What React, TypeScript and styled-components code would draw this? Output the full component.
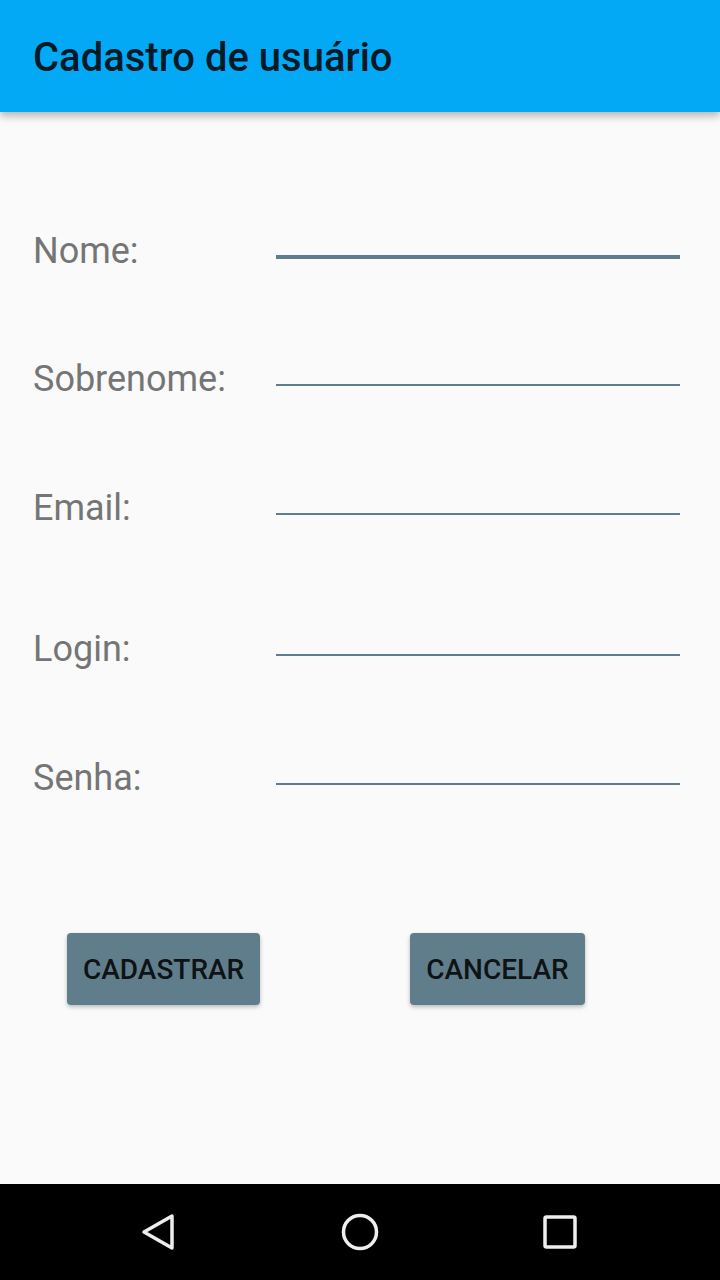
import React from "react";
import styled, { createGlobalStyle } from "styled-components";

const Global = createGlobalStyle`
  html, body { margin: 0; padding: 0; }
  body { font-family: Roboto, "Noto Sans", sans-serif; background: #fafafa; }
  * { box-sizing: border-box; }
`;

const Screen = styled.div`
  width: 720px;
  height: 1280px;
  display: flex;
  flex-direction: column;
  background: #fafafa;
  overflow: hidden;
`;

const AppBar = styled.header`
  height: 112px;
  flex: 0 0 112px;
  background: #03a9f4;
  padding: 38px 0 0 33px;
  box-shadow: 0 4px 8px rgba(0, 0, 0, 0.28);
  position: relative;
  z-index: 1;
`;

const Title = styled.h1`
  margin: 0;
  font-family: Roboto, sans-serif;
  font-weight: 500;
  font-size: 40px;
  line-height: 40px;
  color: rgba(0, 0, 0, 0.87);
`;

const Main = styled.main`
  flex: 1;
  display: flex;
  flex-direction: column;
  padding-top: 118px;
`;

const Row = styled.div<{ $top: number }>`
  display: flex;
  align-items: flex-start;
  margin-top: ${(p) => p.$top}px;
  padding-left: 33px;
`;

const Label = styled.label`
  width: 243px;
  font-family: Roboto, sans-serif;
  font-size: 36px;
  line-height: 42px;
  color: #757575;
`;

const Field = styled.div<{ $focused?: boolean }>`
  width: 404px;
  height: ${(p) => (p.$focused ? 29 : 28)}px;
  border-bottom: ${(p) => (p.$focused ? 4 : 2)}px solid #607d8b;
`;

const Buttons = styled.div`
  display: flex;
  gap: 150px;
  padding-left: 67px;
  margin-top: 134px;
`;

const Button = styled.button`
  height: 72px;
  padding: 0 16px;
  border: none;
  border-radius: 4px;
  background: #607d8b;
  font-family: Roboto, sans-serif;
  font-weight: 500;
  font-size: 28px;
  color: rgba(0, 0, 0, 0.87);
  text-transform: uppercase;
  box-shadow: 0 2px 4px rgba(0, 0, 0, 0.26);
`;

const NavBar = styled.nav`
  height: 96px;
  flex: 0 0 96px;
  background: #000;
  display: grid;
  grid-template-columns: repeat(3, 1fr);
  align-items: center;
`;

const NavSlot = styled.div<{ $shift: number }>`
  display: flex;
  justify-content: center;
  transform: translateX(${(p) => p.$shift}px);
`;

const fields = [
  { label: "Nome:", top: 0, focused: true },
  { label: "Sobrenome:", top: 86 },
  { label: "Email:", top: 87 },
  { label: "Login:", top: 99 },
  { label: "Senha:", top: 87 },
];

export default function App() {
  return (
    <>
      <Global />
      <Screen>
        <AppBar>
          <Title>Cadastro de usuário</Title>
        </AppBar>
        <Main>
          {fields.map((f) => (
            <Row key={f.label} $top={f.top}>
              <Label>{f.label}</Label>
              <Field $focused={f.focused} />
            </Row>
          ))}
          <Buttons>
            <Button>Cadastrar</Button>
            <Button>Cancelar</Button>
          </Buttons>
        </Main>
        <NavBar>
          <NavSlot $shift={40}>
            <svg width="40" height="40" viewBox="0 0 40 40">
              <path d="M32 4 L32 36 L4 20 Z" fill="none" stroke="#eee" strokeWidth="3.5" strokeLinejoin="round" />
            </svg>
          </NavSlot>
          <NavSlot $shift={0}>
            <svg width="40" height="40" viewBox="0 0 40 40">
              <circle cx="20" cy="20" r="16.5" fill="none" stroke="#eee" strokeWidth="3.5" />
            </svg>
          </NavSlot>
          <NavSlot $shift={-40}>
            <svg width="36" height="36" viewBox="0 0 36 36">
              <rect x="3" y="3" width="30" height="30" rx="1.5" fill="none" stroke="#eee" strokeWidth="3.5" />
            </svg>
          </NavSlot>
        </NavBar>
      </Screen>
    </>
  );
}
